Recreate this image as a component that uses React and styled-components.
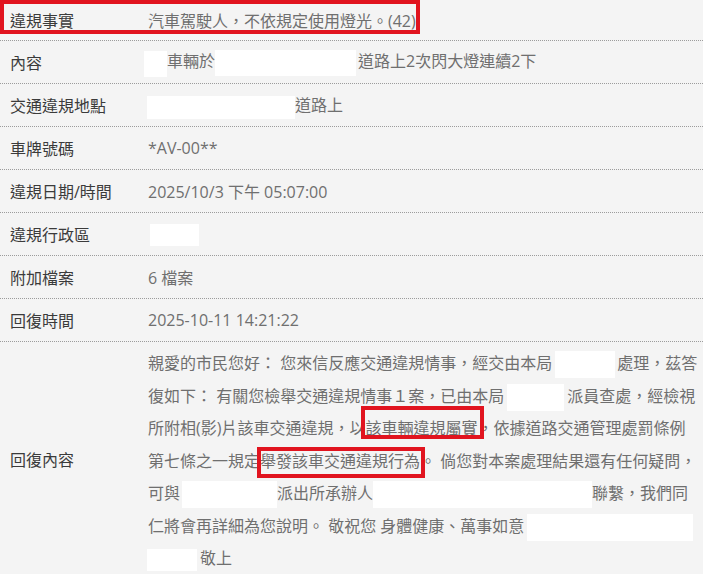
import React from 'react';
import styled, { createGlobalStyle } from 'styled-components';

const Global = createGlobalStyle`
  html, body { margin: 0; padding: 0; background: #f4f4f4; }
  body { font-family: "Open Sans", "Noto Sans CJK TC", sans-serif; }
`;

const Table = styled.div`
  width: 703px;
  display: flex;
  flex-direction: column;
`;

const Row = styled.div`
  position: relative;
  display: grid;
  grid-template-columns: 148px 1fr;
  align-items: center;
  min-height: ${(p) => p.$h ?? 42}px;
  border-bottom: 1px dotted #9c9c9c;
  font-size: 16px;
`;

const Label = styled.div`
  padding-left: 10px;
  color: #3b3b3b;
  white-space: nowrap;
`;

const Value = styled.div`
  color: #6f6f6f;
  white-space: nowrap;
`;

const Redacted = styled.span`
  display: inline-block;
  vertical-align: middle;
  background: #ffffff;
  width: ${(p) => p.$w}px;
  height: ${(p) => p.$h ?? 27}px;
  margin-left: ${(p) => p.$ml ?? 0}px;
  margin-right: ${(p) => p.$mr ?? 0}px;
  position: relative;
  top: ${(p) => p.$dy ?? 0}px;
`;

const RowMark = styled.div`
  position: absolute;
  left: 0;
  top: 0;
  width: ${(p) => p.$w}px;
  height: ${(p) => p.$h}px;
  border: 4px solid #e1141f;
  box-sizing: border-box;
  pointer-events: none;
`;

const Reply = styled.div`
  color: #6f6f6f;
  line-height: 32.5px;
  padding: 5px 0 2px;
`;

const Line = styled.div`
  white-space: nowrap;
`;

const Mark = styled.span`
  position: relative;
  &::after {
    content: '';
    position: absolute;
    left: ${(p) => p.$l}px;
    right: ${(p) => p.$r}px;
    top: ${(p) => p.$t}px;
    bottom: ${(p) => p.$b}px;
    border: 4px solid #e1141f;
    pointer-events: none;
  }
`;

export default function App() {
  return (
    <>
      <Global />
      <Table>
        <Row $h={40}>
          <Label>違規事實</Label>
          <Value>汽車駕駛人，不依規定使用燈光。(42)</Value>
          <RowMark $w={420} $h={34} />
        </Row>
        <Row>
          <Label>內容</Label>
          <Value>
            <Redacted $w={23} $h={26} $ml={-4} $dy={1} />
            車輛於
            <Redacted $w={141} $h={26} $dy={0} />
            <span style={{ marginLeft: 2 }}>道路上2次閃大燈連續2下</span>
          </Value>
        </Row>
        <Row>
          <Label>交通違規地點</Label>
          <Value>
            <Redacted $w={148} $h={23} $ml={-1} $dy={1} />
            道路上
          </Value>
        </Row>
        <Row>
          <Label>車牌號碼</Label>
          <Value>*AV-00**</Value>
        </Row>
        <Row>
          <Label>違規日期/時間</Label>
          <Value>2025/10/3 下午 05:07:00</Value>
        </Row>
        <Row>
          <Label>違規行政區</Label>
          <Value>
            <Redacted $w={49} $h={22} $ml={2} />
          </Value>
        </Row>
        <Row>
          <Label>附加檔案</Label>
          <Value>6 檔案</Value>
        </Row>
        <Row>
          <Label>回復時間</Label>
          <Value>2025-10-11 14:21:22</Value>
        </Row>
        <Row>
          <Label>回復內容</Label>
          <Reply>
            <Line>
              親愛的市民您好： 您來信反應交通違規情事，經交由本局
              <Redacted $w={60} $ml={3} $mr={2} />
              處理，茲答
            </Line>
            <Line>
              復如下： 有關您檢舉交通違規情事１案，已由本局
              <Redacted $w={57} $ml={3} $mr={3} />
              派員查處，經檢視
            </Line>
            <Line>
              所附相(影)片該車交通違規，以
              <Mark $l={-4} $r={-7} $t={-11} $b={0}>該車輛違規屬實</Mark>
              ，依據道路交通管理處罰條例
            </Line>
            <Line>
              第七條之一規定
              <Mark $l={-3} $r={-5} $t={-3} $b={-6}>舉發該車交通違規行為</Mark>
              。 倘您對本案處理結果還有任何疑問，
            </Line>
            <Line>
              可與
              <Redacted $w={95} $ml={2} />
              派出所承辦人
              <Redacted $w={219} />
              聯繫，我們同
            </Line>
            <Line>
              仁將會再詳細為您說明。 敬祝您 身體健康、萬事如意
              <Redacted $w={166} $ml={3} />
            </Line>
            <Line>
              <Redacted $w={50} $h={22} $ml={-1} $mr={3} />
              敬上
            </Line>
          </Reply>
        </Row>
      </Table>
    </>
  );
}
